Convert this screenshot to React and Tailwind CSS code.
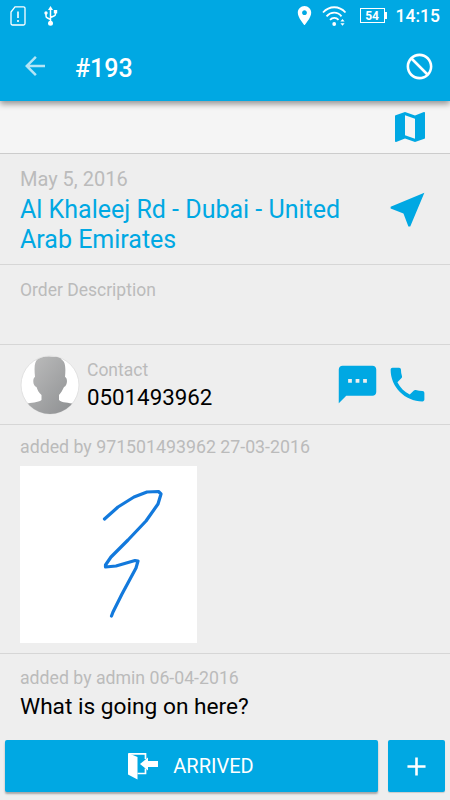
import React from 'react';

const Icon = ({ d, size, className = '' }) => (
  <svg viewBox="0 0 24 24" width={size} height={size} fill="currentColor" className={`shrink-0 ${className}`}>
    <path d={d} />
  </svg>
);

const icons = {
  back: 'M20 11H7.83l5.59-5.59L12 4l-8 8 8 8 1.41-1.41L7.83 13H20v-2z',
  block: 'M12 2C6.48 2 2 6.48 2 12s4.48 10 10 10 10-4.48 10-10S17.52 2 12 2zM4 12c0-4.42 3.58-8 8-8 1.85 0 3.55.63 4.9 1.69L5.69 16.9C4.63 15.55 4 13.85 4 12zm8 8c-1.85 0-3.55-.63-4.9-1.69L18.31 7.1C19.37 8.45 20 10.15 20 12c0 4.42-3.58 8-8 8z',
  map: 'M20.5 3l-.16.03L15 5.1 9 3 3.36 4.9c-.21.07-.36.25-.36.48V20.5c0 .28.22.5.5.5l.16-.03L9 18.9l6 2.1 5.64-1.9c.21-.07.36-.25.36-.48V3.5c0-.28-.22-.5-.5-.5zM15 19l-6-2.11V5l6 2.11V19z',
  navigate: 'M21 3L3 10.53v.98l6.84 2.65L12.48 21h.98L21 3z',
  sms: 'M20 2H4c-1.1 0-1.99.9-1.99 2L2 22l4-4h14c1.1 0 2-.9 2-2V4c0-1.1-.9-2-2-2zM9 11H7V9h2v2zm4 0h-2V9h2v2zm4 0h-2V9h2v2z',
  phone: 'M6.62 10.79c1.44 2.83 3.76 5.14 6.59 6.59l2.2-2.2c.27-.27.67-.36 1.02-.24 1.12.37 2.33.57 3.57.57.55 0 1 .45 1 1V20c0 .55-.45 1-1 1-9.39 0-17-7.61-17-17 0-.55.45-1 1-1h3.5c.55 0 1 .45 1 1 0 1.25.2 2.45.57 3.57.11.35.03.74-.25 1.02l-2.2 2.2z',
  place: 'M12 2C8.13 2 5 5.13 5 9c0 5.25 7 13 7 13s7-7.75 7-13c0-3.87-3.13-7-7-7zm0 9.5c-1.38 0-2.5-1.12-2.5-2.5s1.12-2.5 2.5-2.5 2.5 1.12 2.5 2.5-1.12 2.5-2.5 2.5z',
  plus: 'M19 13h-6v6h-2v-6H5v-2h6V5h2v6h6v2z',
};

const StatusBar = () => (
  <div className="flex h-8 items-center pl-[10px] pr-[10px]">
    <svg width="17" height="20" viewBox="0 0 17 20" fill="none" stroke="white" strokeWidth="1.3" className="-mt-px">
      <path d="M5 .8H13.500a1.500 1.500 0 0 1 1.500 1.500V17.500a1.500 1.500 0 0 1-1.500 1.500H2.500a1.500 1.500 0 0 1-1.500-1.500V6z" />
      <path d="M8 5.500v6.500M8 14v2" strokeWidth="1.6" />
    </svg>
    <svg width="14" height="20" viewBox="0 0 14 20" className="ml-[17px] -mt-px" fill="none" stroke="white" strokeWidth="1.5">
      <path d="M6.5 3v14M2 7v3q0 1.5 1.5 2l3 1.5M11.500 5v3q0 1.500-1.500 2l-3.500 1.500" />
      <g fill="white" stroke="none">
        <path d="M6.500 0L9 4H4z" />
        <circle cx="6.500" cy="17.200" r="2.500" />
        <circle cx="2" cy="7" r="1.700" />
        <path d="M9.800 4h3.400v3.400H9.800z" />
      </g>
    </svg>
    <div className="ml-auto flex items-center">
      <Icon d={icons.place} size={23} className="mr-[6px] -mt-px" />
      <svg width="25" height="22" viewBox="0 0 25 22" fill="none" stroke="white" strokeWidth="1.8">
        <path d="M1 7.500C7.500.5 17 .5 23.500 7.500M4.500 11.300c4.500-4.800 11-4.800 15 0M8 14.800c2.500-2.600 6.200-2.600 8.500 0" />
        <circle cx="12.200" cy="19" r="1.900" fill="white" stroke="none" />
        <path d="M20.500 14l2.100 2.600h-4.200zM20.500 20.800l2.100-2.600h-4.200z" fill="white" stroke="none" />
      </svg>
      <div className="ml-[13px] -mt-px flex items-center">
        <div className="flex h-[15px] w-[25px] items-center justify-center border-[1.5px] border-white text-[12px] leading-none font-bold">54</div>
        <div className="h-[7px] w-[2px] bg-white" />
      </div>
      <span className="ml-[9px] text-[17.500px] leading-5 font-medium">14:15</span>
    </div>
  </div>
);

const Avatar = () => (
  <svg width="60" height="60" viewBox="0 0 60 60" className="shrink-0">
    <defs>
      <linearGradient id="silhouette" x1="0" y1="0" x2="1" y2="1">
        <stop offset="0" stopColor="#bebebe" />
        <stop offset="1" stopColor="#8c8e90" />
      </linearGradient>
      <clipPath id="face"><circle cx="30" cy="30" r="29" /></clipPath>
    </defs>
    <circle cx="30" cy="30" r="29" fill="white" stroke="#e2e2e2" strokeWidth="1" />
    <path clipPath="url(#face)" fill="url(#silhouette)" d="M15 22C14 12 14.500 6 18 4C23 1 30 1 34.500 2C38 1 41 2.500 42 5C45 7 46 11 45 22C48 23 47.500 31 44 32C42.500 35 41 38 39 40V45C42 48 49 47.500 54 49V60H6V49C11 47 18 48 21.500 45V40C19 38 17.500 35 16.500 32C12.500 31 12.500 23 15 22z" />
  </svg>
);

export default function App() {
  return (
    <div className="flex h-[800px] w-[450px] flex-col overflow-hidden bg-[#eeeeee] font-['Roboto',sans-serif] text-black">
      <header className="relative h-[101px] shrink-0 bg-[#00a8e3] text-white shadow-[0_3px_6px_rgba(0,0,0,0.4)]">
        <StatusBar />
        <div className="flex h-[69px] items-center pr-[15px] pl-5">
          <Icon d={icons.back} size={30} className="-mt-px opacity-70" />
          <h1 className="ml-[25px] flex-1 pt-[4px] text-[25px] font-medium">#193</h1>
          <Icon d={icons.block} size={31} className="-mt-px -scale-x-100" />
        </div>
      </header>

      <div className="flex h-[53px] shrink-0 items-center justify-end border-b border-[#cccccc] bg-[#f5f5f5] pr-5 text-[#00a8e3]">
        <Icon d={icons.map} size={40} />
      </div>

      <section className="flex h-[111px] shrink-0 border-b border-[#d6d6d6] px-5">
        <div className="flex-1 pt-[13px]">
          <p className="text-[20px] leading-6 text-[#bbbbbb]">May 5, 2016</p>
          <p className="mt-[4px] text-[25px] leading-[29.500px] whitespace-nowrap text-[#00a8e3]">Al Khaleej Rd - Dubai - United<br />Arab Emirates</p>
        </div>
        <Icon d={icons.navigate} size={45} className="mt-[33px] text-[#00a8e3]" />
      </section>

      <section className="h-20 shrink-0 border-b border-[#d6d6d6] px-5 pt-[15px]">
        <p className="text-[17.500px] leading-[21px] text-[#bbbbbb]">Order Description</p>
      </section>

      <section className="flex h-20 shrink-0 items-center border-b border-[#d6d6d6] px-5">
        <Avatar />
        <div className="ml-[7px] flex-1 pt-px">
          <p className="text-[17.500px] leading-[21px] text-[#bbbbbb]">Contact</p>
          <p className="mt-[3px] text-[22.300px] leading-[27px]">0501493962</p>
        </div>
        <div className="flex gap-[5px] text-[#00a8e3]">
          <Icon d={icons.sms} size={45} />
          <Icon d={icons.phone} size={45} />
        </div>
      </section>

      <section className="h-[229px] shrink-0 border-b border-[#d6d6d6] px-5 pt-3">
        <p className="text-[17.750px] leading-[21px] text-[#bbbbbb]">added by 971501493962 27-03-2016</p>
        <div className="mt-[8px] h-[177px] w-[177px] bg-white">
          <svg width="177" height="177" viewBox="0 1 177 177" fill="none" stroke="#1279dc" strokeWidth="3.2" strokeLinecap="round" strokeLinejoin="round">
            <path d="M84.500 54L98 42L114 32L127 27L138.500 26.500L141 29L138 39L126 56L108 75L91 92L85.500 100V102L96 101L115 95.500L118 96L116 103L102 129L93 147L91.500 151" />
          </svg>
        </div>
      </section>

      <section className="shrink-0 px-5 pt-[14px]">
        <p className="text-[17.700px] leading-[21px] text-[#bbbbbb]">added by admin 06-04-2016</p>
        <p className="mt-[4px] text-[22.700px] leading-[27px]">What is going on here?</p>
      </section>

      <footer className="mt-auto mb-2 flex h-[52px] shrink-0 gap-[10px] px-[5px] text-white">
        <button className="flex flex-1 items-center justify-center rounded-xs bg-[#00a8e3] pr-[2px] text-[20px] shadow-[0_2px_2px_rgba(0,0,0,0.3)]">
          <svg width="32" height="28" viewBox="0 0 32 28" className="mr-[14px]">
            <path d="M2 1.800h16.500v5.200M18.500 16.500v5h-8" fill="none" stroke="white" strokeWidth="1.700" />
            <path d="M1 1l9.500 4v22.500L1 22.500zM13 12l8-6.500v3.500H31v6h-10V18.500z" fill="white" />
          </svg>
          ARRIVED
        </button>
        <button className="flex w-[57px] items-center justify-center rounded-xs bg-[#00a8e3] shadow-[0_1px_1px_rgba(0,0,0,0.15)]">
          <Icon d={icons.plus} size={31} />
        </button>
      </footer>
    </div>
  );
}
